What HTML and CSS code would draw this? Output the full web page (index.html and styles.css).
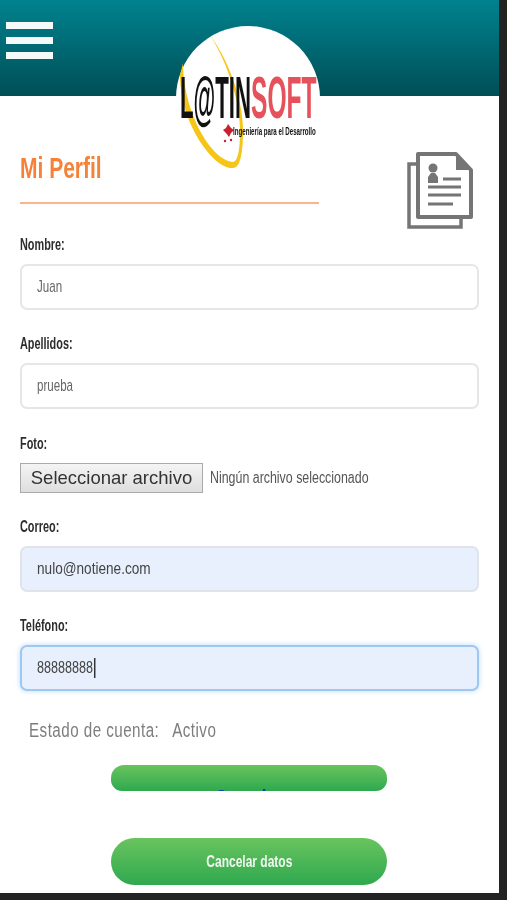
FILE: index.html
```html
<!DOCTYPE html>
<html lang="es">
<head>
    <meta charset="UTF-8">
    <meta name="viewport" content="width=device-width, initial-scale=1.0">
    <title>Mi Perfil</title>
    <link rel="stylesheet" href="styles.css">
</head>
<body>
    <div class="page">
        <header class="topbar">
            <div class="menu-icon">
                <span></span>
                <span></span>
                <span></span>
            </div>
            <div class="logo">
                <svg viewBox="0 0 146 146" width="146" height="146">
                    <circle cx="73" cy="73" r="72" fill="#fff"/>
                    <path d="M35 10 C50 30 68 70 68 105 C68 125 66 143 58 143 C40 145 5 100 5 50 L8 38 C8 85 35 135 58 137 C63 136 65 125 65 105 C65 70 48 30 35 10 Z" fill="#f5c518"/>
                    <text class="logo-black" transform="translate(5 93) scale(0.37 1)">L@TIN</text>
                    <text class="logo-red" transform="translate(76 93) scale(0.41 1)">SOFT</text>
                    <path d="M53 99 L56 103 L59 105 L56 108 L54 112 L51 108 L48 105 L51 103 Z" fill="#c8202c"/>
                    <circle cx="50" cy="116" r="1.2" fill="#c8202c"/>
                    <circle cx="56" cy="115" r="1.2" fill="#c8202c"/>
                    <text class="logo-tag" transform="translate(58 110) scale(0.56 1)">Ingeniería para el Desarrollo</text>
                </svg>
            </div>
        </header>

        <main class="content">
            <div class="title-row">
                <h1 class="title"><span class="narrow">Mi Perfil</span></h1>
                <svg class="doc-icon" viewBox="0 0 67 78" width="67" height="78" fill="none" stroke="#757575">
                    <path d="M10 13 H3 V76 H55 V68" stroke-width="3.5"/>
                    <path d="M12 3 H50 L65 19 V66 H12 Z" stroke-width="4" stroke-linejoin="round"/>
                    <path d="M50 3 L65 19 H50 Z" fill="#757575" stroke="none"/>
                    <circle cx="27" cy="17" r="4.5" fill="#757575" stroke="none"/>
                    <path d="M22 32 V26 L25 22 H29 L32 26 V32 Z" fill="#757575" stroke="none"/>
                    <path d="M37 28 H55 M22 36 H55 M22 44 H55 M22 53 H47" stroke-width="3"/>
                </svg>
            </div>

            <form class="profile-form">
                <div class="form-group">
                    <label><span class="narrow">Nombre:</span></label>
                    <div class="field"><span class="narrow">Juan</span></div>
                </div>
                <div class="form-group">
                    <label><span class="narrow">Apellidos:</span></label>
                    <div class="field"><span class="narrow">prueba</span></div>
                </div>
                <div class="form-group photo-group">
                    <label><span class="narrow">Foto:</span></label>
                    <div class="file-row">
                        <button class="file-btn" type="button">Seleccionar archivo</button>
                        <span class="file-name narrow">Ningún archivo seleccionado</span>
                    </div>
                </div>
                <div class="form-group">
                    <label><span class="narrow">Correo:</span></label>
                    <div class="field field-filled"><span class="narrow email">nulo@notiene.com</span></div>
                </div>
                <div class="form-group">
                    <label><span class="narrow">Teléfono:</span></label>
                    <div class="field field-filled field-focus"><span class="narrow phone">88888888<span class="caret"></span></span></div>
                </div>
            </form>

            <p class="status"><span class="narrow">Estado de cuenta:<span class="status-value">Activo</span></span></p>

            <div class="btn-green btn-save"><span class="narrow">Guardar</span></div>
            <div class="btn-green btn-cancel"><span class="narrow">Cancelar datos</span></div>
        </main>
    </div>
</body>
</html>
```

FILE: styles.css
```css
* {
    margin: 0;
    padding: 0;
    box-sizing: border-box;
}

body {
    background: #232323;
    font-family: 'Liberation Sans', sans-serif;
    height: 900px;
    overflow: hidden;
}

.page {
    width: 499px;
    height: 893px;
    background: #fff;
    overflow: hidden;
    filter: blur(0.5px);
}

/* the page font is a condensed one, squeeze each text */
.narrow {
    display: inline-block;
    white-space: nowrap;
    transform: scaleX(0.68);
    transform-origin: left center;
}

.topbar {
    height: 96px;
    background: linear-gradient(180deg, #00838f 0%, #004e56 100%);
    padding: 22px 0 0 6px;
    position: relative;
}

.menu-icon {
    width: 47px;
    display: flex;
    flex-direction: column;
    gap: 8px;
}

.menu-icon span {
    height: 7px;
    background: #f4fafa;
}

.logo {
    position: absolute;
    left: 175px;
    top: 25px;
}

.logo svg {
    display: block;
}

.logo-black,
.logo-red {
    font-size: 60px;
    font-weight: bold;
}

.logo-black {
    fill: #111;
}

.logo-red {
    fill: #e5525c;
}

.logo-tag {
    font-size: 11px;
    font-weight: bold;
    fill: #111;
}

.content {
    padding: 55px 20px 0;
}

.title-row {
    display: flex;
    justify-content: space-between;
    align-items: flex-start;
    height: 78px;
    padding-right: 6px;
}

.title {
    width: 299px;
    height: 53px;
    border-bottom: 2px solid #fdb48c;
    color: #f6823a;
    font-size: 30px;
    font-weight: bold;
    line-height: 34px;
}

.title .narrow {
    transform: scaleX(0.7);
}

.profile-form {
    margin-top: 6px;
}

.form-group {
    margin-bottom: 24px;
}

.form-group label {
    display: block;
    height: 20px;
    margin-bottom: 9px;
    color: #2d2d2d;
    font-size: 16px;
    font-weight: bold;
    line-height: 20px;
}

.field {
    display: block;
    width: 100%;
    height: 46px;
    padding: 0 15px;
    border: 2px solid #e6e6e6;
    border-radius: 7px;
    background: #fff;
    color: #666;
    font-size: 17px;
    line-height: 42px;
}

.field-filled {
    background: #e8f0fe;
    color: #444;
    border-color: #e0e3ea;
}

.field-focus {
    border-color: #9cc8f2;
    box-shadow: 0 0 5px rgba(120, 180, 240, 0.5);
}

.email {
    transform: scaleX(0.8);
}

.phone {
    transform: scaleX(0.74);
}

.caret {
    display: inline-block;
    width: 2px;
    height: 20px;
    margin-left: 1px;
    background: #333;
    vertical-align: -5px;
}

.photo-group {
    margin-top: 25px;
}

.file-row {
    display: flex;
    align-items: center;
    gap: 7px;
}

.file-btn {
    width: 183px;
    height: 30px;
    border: 1px solid #aaa;
    background: linear-gradient(180deg, #f4f4f4 0%, #dedede 100%);
    color: #333;
    font-family: inherit;
    font-size: 18.5px;
}

.file-name {
    color: #555;
    font-size: 16px;
    transform: scaleX(0.775);
}

.status {
    margin: 26px 0 0 9px;
    color: #7d7d7d;
    font-size: 20px;
    letter-spacing: 0.6px;
    line-height: 26px;
}

.status .narrow {
    transform: scaleX(0.76);
}

.status-value {
    margin-left: 17px;
}

.btn-green {
    width: 276px;
    margin-left: 91px;
    background: linear-gradient(180deg, #69c45e 0%, #2fa84f 100%);
    font-weight: bold;
    text-align: center;
}

.btn-green .narrow {
    transform-origin: center;
}

.btn-save {
    height: 26px;
    margin-top: 22px;
    border-radius: 13px 13px 11px 11px;
    padding-top: 20px;
    overflow: hidden;
    color: #1a2fd0;
    font-size: 22px;
    line-height: 26px;
}

.btn-save .narrow {
    transform: scaleX(0.8);
}

.btn-cancel {
    height: 47px;
    margin-top: 47px;
    border-radius: 24px;
    color: #f2f8f0;
    font-size: 16px;
    line-height: 47px;
}

.btn-cancel .narrow {
    transform: scaleX(0.75);
}
```
